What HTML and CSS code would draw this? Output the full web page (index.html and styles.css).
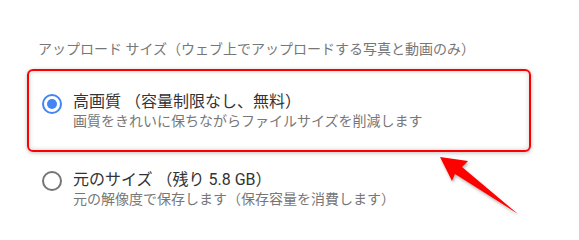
FILE: index.html
```html
<!DOCTYPE html>
<html lang="ja">
<head>
<meta charset="utf-8">
<link rel="stylesheet" href="styles.css">
</head>
<body>
<div class="page">
  <div class="heading">アップロード サイズ（ウェブ上でアップロードする写真と動画のみ）</div>
  <div class="option selected">
    <span class="radio checked"></span>
    <div class="labels">
      <div class="title">高画質 （容量制限なし、無料）</div>
      <div class="sub">画質をきれいに保ちながらファイルサイズを削減します</div>
    </div>
  </div>
  <div class="option plain">
    <span class="radio"></span>
    <div class="labels">
      <div class="title">元のサイズ （残り 5.8 GB）</div>
      <div class="sub">元の解像度で保存します（保存容量を消費します）</div>
    </div>
  </div>
</div>
<svg class="arrow" width="579" height="232" viewBox="0 0 579 232">
  <defs>
    <filter id="sh" x="-20%" y="-20%" width="140%" height="140%">
      <feDropShadow dx="1" dy="2" stdDeviation="1.5" flood-color="#000" flood-opacity="0.3"/>
    </filter>
  </defs>
  <polygon points="440,157 468,161 462,167 518,214 455,174 452,181" fill="#ff0000" filter="url(#sh)"/>
</svg>
</body>
</html>
```
FILE: styles.css
```css
html, body {
  margin: 0;
  padding: 0;
  background: #fff;
}
body {
  width: 579px;
  height: 232px;
  overflow: hidden;
  position: relative;
  font-family: Roboto, "Noto Sans CJK JP", sans-serif;
}
.page {
  padding: 39px 0 0 27px;
}
.heading {
  margin-left: 11px;
  font-size: 14px;
  line-height: 20px;
  color: #777;
  margin-bottom: 10px;
}
.option {
  display: flex;
  align-items: flex-start;
  gap: 11px;
  width: 474px;
  padding-left: 13px;
  padding-right: 13px;
  border: 2px solid transparent;
  border-radius: 6px;
}
.option.selected {
  box-sizing: border-box;
  width: 504px;
  height: 83px;
  padding-top: 21px;
  border-color: #ff0000;
  box-shadow: 0 1px 4px rgba(0,0,0,0.25), inset 0 0 5px rgba(0,0,0,0.18);
}
.option.plain {
  padding-top: 16px;
}
.radio {
  flex: none;
  width: 20px;
  height: 20px;
  box-sizing: border-box;
  border: 2px solid #757575;
  border-radius: 50%;
  margin-top: 1px;
  display: flex;
  align-items: center;
  justify-content: center;
}
.radio.checked {
  border-color: #4285f4;
  margin-top: 2px;
}
.radio.checked::after {
  content: "";
  width: 10px;
  height: 10px;
  border-radius: 50%;
  background: #4285f4;
}
.title {
  font-size: 16px;
  line-height: 20px;
  color: #333;
}
.sub {
  font-size: 14px;
  line-height: 18px;
  color: #777;
}
.arrow {
  position: absolute;
  left: 0;
  top: 0;
  pointer-events: none;
}
```
